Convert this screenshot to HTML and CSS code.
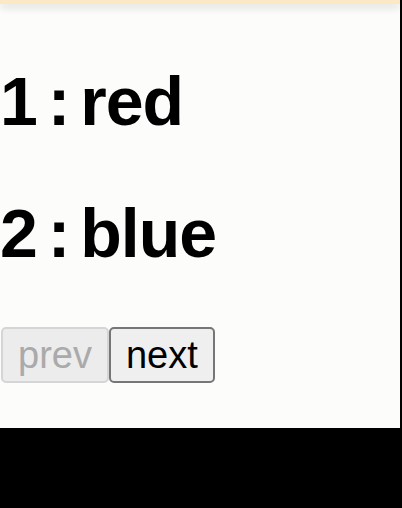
FILE: index.html
```html
<!DOCTYPE html>
<html>
<head>
<meta charset="utf-8">
<link rel="stylesheet" href="styles.css">
</head>
<body>
<div class="page">
  <div class="topbar"></div>
  <main class="content">
    <h1 class="item">1 : red</h1>
    <h1 class="item">2 : blue</h1>
    <div class="pager">
      <button class="btn" disabled>prev</button>
      <button class="btn">next</button>
    </div>
  </main>
</div>
</body>
</html>
```
FILE: styles.css
```css
html, body {
  margin: 0;
  padding: 0;
  background: #000;
}
.page {
  width: 400px;
  height: 428px;
  background: #fcfcfa;
  font-family: "Liberation Sans", Arial, sans-serif;
  overflow: hidden;
}
.topbar {
  height: 4px;
  background: #fde8c6;
  box-shadow: 0 3px 8px rgba(0, 0, 0, 0.18);
}
.content {
  padding-top: 60px;
}
.item {
  margin: 0 0 58px 0;
  font-size: 68px;
  line-height: 74px;
  font-weight: bold;
  color: #000;
  letter-spacing: -1px;
  word-spacing: -7px;
}
.pager {
  display: flex;
  margin-top: -1px;
  padding-left: 1px;
}
.btn {
  font-family: "Liberation Sans", Arial, sans-serif;
  font-size: 38px;
  height: 56px;
  padding: 0 15px;
  background: #efefef;
  color: #000;
  border: 2px solid #767676;
  border-radius: 5px;
  margin: 0;
}
.btn:disabled {
  color: #aaaaaa;
  border-color: #d5d5d5;
  background: #ececec;
}
```
